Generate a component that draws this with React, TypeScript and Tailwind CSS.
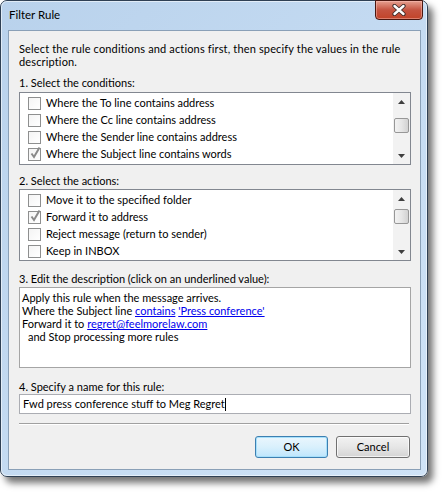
import React from "react";

const conditions = [
  { label: "Where the To line contains address", checked: false },
  { label: "Where the Cc line contains address", checked: false },
  { label: "Where the Sender line contains address", checked: false },
  { label: "Where the Subject line contains words", checked: true },
];

const actions = [
  { label: "Move it to the specified folder", checked: false },
  { label: "Forward it to address", checked: true },
  { label: "Reject message (return to sender)", checked: false },
  { label: "Keep in INBOX", checked: false },
];

function CheckBox({ checked }: { checked: boolean }) {
  return (
    <div className="relative w-[13px] h-[13px] shrink-0 border border-[#8e8f8f] bg-gradient-to-br from-[#f4f4f4] to-white">
      {checked && (
        <svg
          width="13"
          height="13"
          viewBox="0 0 13 13"
          className="absolute left-[0px] top-[-2px] overflow-visible"
        >
          <path d="M2.5 6.5 L5 10 L10.5 0.5" fill="none" stroke="#8a8a8a" strokeWidth="2" />
        </svg>
      )}
    </div>
  );
}

function Arrow({ up }: { up: boolean }) {
  return (
    <svg width="7" height="4" viewBox="0 0 7 4">
      <polygon points={up ? "0,4 3.5,0 7,4" : "0,0 3.5,4 7,0"} fill="#3f3f3f" />
    </svg>
  );
}

function ScrollBar({ thumbTop }: { thumbTop: number }) {
  return (
    <div className="w-[17px] h-full bg-[#f2f2f2] flex flex-col items-center shrink-0">
      <div className="h-[17px] w-full flex items-center justify-center">
        <Arrow up />
      </div>
      <div
        className="w-[15px] h-[15px] rounded-[2px] border border-[#979797] bg-gradient-to-r from-[#f2f2f2] via-[#e6e6e6] to-[#d2d2d2]"
        style={{ marginTop: thumbTop }}
      />
      <div className="flex-1" />
      <div className="h-[17px] w-full flex items-center justify-center">
        <Arrow up={false} />
      </div>
    </div>
  );
}

function CheckList({
  items,
  height,
  thumbTop,
}: {
  items: { label: string; checked: boolean }[];
  height: string;
  thumbTop: number;
}) {
  return (
    <div className={`w-[392px] ${height} border border-[#828790] bg-white flex`}>
      <div className="flex-1 pt-[2px] pl-[8px]">
        {items.map((it) => (
          <div key={it.label} className="h-[17px] flex items-center gap-[5px]">
            <CheckBox checked={it.checked} />
            <span>{it.label}</span>
          </div>
        ))}
      </div>
      <ScrollBar thumbTop={thumbTop} />
    </div>
  );
}

function Link({ children }: { children: React.ReactNode }) {
  return <span className="text-[#0000ee] underline underline-offset-[1px]">{children}</span>;
}

export default function App() {
  return (
    <div className="w-[444px] h-[492px] bg-white font-['Lato',sans-serif] text-[11px] text-black">
      <div className="relative w-[428px] h-[477px] rounded-[7px] border border-[#2f4054] bg-gradient-to-br from-[#b9d2ec] to-[#cfe3f7] shadow-[5px_6px_7px_rgba(0,0,0,0.55)] flex flex-col">
        <div className="absolute inset-0 rounded-[6px] shadow-[inset_0_0_0_1px_rgba(255,255,255,0.55)] pointer-events-none" />

        {/* Title bar */}
        <div className="h-[29px] flex items-center pl-[8px] pb-[2px]">
          <span className="leading-none text-[11.5px]">Filter Rule</span>
        </div>

        {/* Close button */}
        <div className="absolute top-[-1px] right-[4px] w-[48px] h-[20px] rounded-b-[4px] border border-[#4a1710] bg-gradient-to-b from-[#e5a090] via-[#c55340] to-[#c14328] shadow-[inset_0_0_0_1px_rgba(255,200,190,0.45)] flex items-center justify-center">
          <svg width="14" height="12" viewBox="0 0 14 12">
            <path d="M2.5 2 L11.5 10 M11.5 2 L2.5 10" stroke="#3a2a28" strokeWidth="4.2" strokeLinecap="round" />
            <path d="M2.5 2 L11.5 10 M11.5 2 L2.5 10" stroke="#ffffff" strokeWidth="2.4" strokeLinecap="round" />
          </svg>
        </div>

        {/* Client area */}
        <div className="ml-[7px] mr-[6px] mb-[6px] flex-1 border border-[#8aa0b7] bg-[#f0f0f0] px-[10px] flex flex-col">
          <p className="pt-[11px] leading-[13px] whitespace-nowrap tracking-[0.15px]">
            Select the rule conditions and actions first, then specify the values in the rule
            <br />
            description.
          </p>

          <div className="mt-[8px] h-[13px] leading-[13px]">1. Select the conditions:</div>
          <div className="mt-[3px]">
            <CheckList items={conditions} height="h-[73px]" thumbTop={8} />
          </div>

          <div className="mt-[9px] h-[13px] leading-[13px]">2. Select the actions:</div>
          <div className="mt-[2px]">
            <CheckList items={actions} height="h-[72px]" thumbTop={2} />
          </div>

          <div className="mt-[11px] h-[13px] leading-[13px]">
            3. Edit the description (click on an underlined value):
          </div>
          <div className="mt-[2px] w-[392px] h-[81px] border border-[#a5a5a5] bg-white pt-[3px] pl-[2px] leading-[13px]">
            <div>Apply this rule when the message arrives.</div>
            <div>
              Where the Subject line <Link>contains</Link> <Link>'Press conference'</Link>
            </div>
            <div>
              Forward it to <Link>regret@feelmorelaw.com</Link>
            </div>
            <div className="pl-[6px]">and Stop processing more rules</div>
          </div>

          <div className="mt-[12px] h-[13px] leading-[13px]">4. Specify a name for this rule:</div>
          <div className="mt-[1px] w-[392px] h-[20px] border border-[#abadb3] bg-white pl-[3px] flex items-center">
            <span>Fwd press conference stuff to Meg Regret</span>
            <span className="w-px h-[13px] bg-black" />
          </div>

          <div className="mt-[9px] w-[390px] border-t border-t-[#a0a0a0] border-b border-b-white" />

          <div className="mt-[11px] flex justify-end gap-[8px]">
            <button className="w-[73px] h-[22px] rounded-[3px] border border-[#3c7fb1] bg-gradient-to-b from-[#eaf6fd] via-[#d9f0fc] to-[#bee6fd] shadow-[inset_0_0_0_1px_#a7e0fb] flex items-center justify-center">
              OK
            </button>
            <button className="w-[74px] h-[22px] rounded-[3px] border border-[#707070] bg-gradient-to-b from-[#f2f2f2] via-[#e6e6e6] to-[#d4d4d4] shadow-[inset_0_0_0_1px_rgba(255,255,255,0.7)] flex items-center justify-center">
              Cancel
            </button>
          </div>
        </div>
      </div>
    </div>
  );
}
